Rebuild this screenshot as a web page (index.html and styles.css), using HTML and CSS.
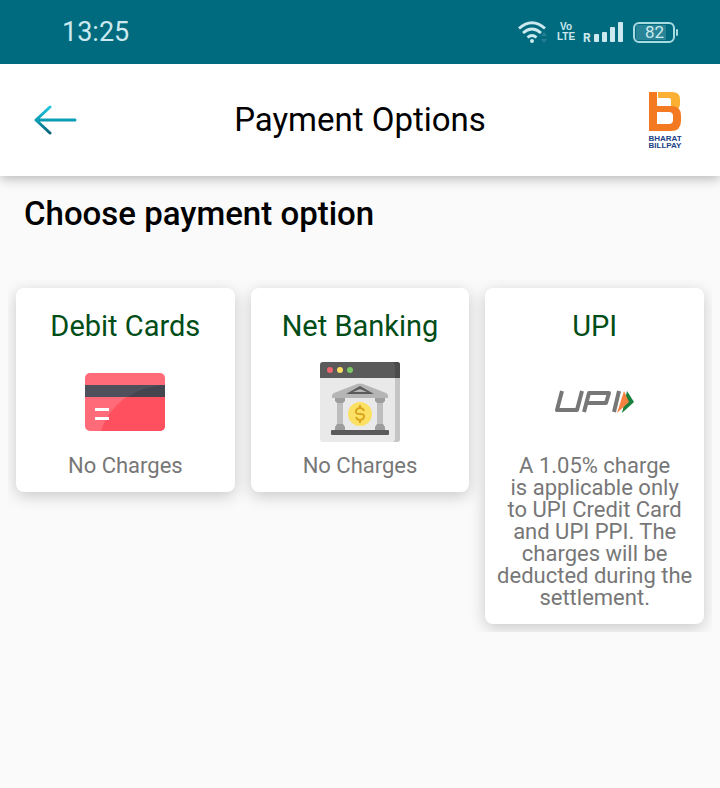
FILE: index.html
```html
<!DOCTYPE html>
<html lang="en">
<head>
    <meta charset="UTF-8">
    <meta name="viewport" content="width=device-width, initial-scale=1.0">
    <title>Payment Options</title>
    <link rel="stylesheet" href="styles.css">
</head>
<body>
    <div class="status-bar">
        <span class="clock">13:25</span>
        <div class="status-icons">
            <svg class="wifi" width="30" height="24" viewBox="0 0 30 24" fill="none" stroke="#cbe9ee" stroke-width="3">
                <path d="M1 8.500Q14 -3 27 8.500M5 13Q14 5 23 13M9.500 17.500Q14 13.500 18.500 17.500"/>
                <circle cx="14" cy="21" r="2" fill="#cbe9ee" stroke="none"/>
                <path d="M23 16l3-4 3 4zM23 19l3 4 3-4z" fill="#267f91" stroke="none"/>
            </svg>
            <span class="volte"><span>Vo</span><span>LTE</span></span>
            <span class="roaming">R</span>
            <svg class="signal" width="30" height="22" viewBox="0 0 30 22" fill="#cbe9ee">
                <rect x="0" y="13" width="5" height="8" rx="1"/>
                <rect x="8" y="11" width="5" height="10" rx="1"/>
                <rect x="16" y="6" width="5" height="15" rx="1"/>
                <rect x="24" y="1" width="5" height="20" rx="1"/>
            </svg>
            <span class="battery"><span class="battery-level">82</span></span>
        </div>
    </div>

    <header class="header">
        <button class="back" type="button" aria-label="Back">
            <svg width="44" height="32" viewBox="0 0 44 32" fill="none" stroke-width="3" stroke-linecap="round" stroke-linejoin="round">
                <defs>
                    <linearGradient id="arrow" gradientUnits="userSpaceOnUse" x1="0" y1="2" x2="0" y2="30">
                        <stop offset="0" stop-color="#22c8dd"/>
                        <stop offset="0.500" stop-color="#0b9db5"/>
                        <stop offset="1" stop-color="#075f78"/>
                    </linearGradient>
                </defs>
                <path d="M16 3L2 16l14 13M2 16h39" stroke="url(#arrow)"/>
            </svg>
        </button>
        <h1>Payment Options</h1>
        <svg class="bbps" width="36" height="58" viewBox="0 0 36 58" role="img" aria-label="Bharat BillPay">
            <path d="M11 1h14q8 0 8 7v5q0 4-4 6-1-3-5-3V9q0-2-2-2H11z" fill="#fbb034"/>
            <path d="M2 1h8v14h15q9 0 9 10v5q0 10-10 10H2zM10 21v12h12q4 0 4-4v-4q0-4-4-4z" fill="#f37a20" fill-rule="evenodd"/>
            <text class="bbps-text" x="18" y="50">BHARAT</text>
            <text class="bbps-text" x="18" y="57">BILLPAY</text>
        </svg>
    </header>

    <main>
        <h2>Choose payment option</h2>

        <div class="options">
            <button class="option" type="button">
                <span class="option-title">Debit Cards</span>
                <svg width="80" height="80" viewBox="0 0 80 80">
                    <clipPath id="card-shape"><rect y="11" width="80" height="58" rx="5"/></clipPath>
                    <g clip-path="url(#card-shape)">
                        <path d="M0 11h80v58H0z" fill="#ff6b78"/>
                        <path d="M0 23h80v12H0z" fill="#50505c"/>
                        <path d="M16 69C24 45 45 25 80 23v46z" fill="#ff5060"/>
                        <path d="M0 23h80v12H0z" fill="#50505c"/>
                        <path d="M43 35Q59 24 80 23v12z" fill="#454550"/>
                        <path d="M10 46h14v3H10zM10 55h14v3H10z" fill="#fff"/>
                    </g>
                </svg>
                <span class="option-note">No Charges</span>
            </button>

            <button class="option" type="button">
                <span class="option-title">Net Banking</span>
                <svg width="80" height="80" viewBox="0 0 80 80">
                    <clipPath id="window-shape"><rect width="80" height="80" rx="3"/></clipPath>
                    <g clip-path="url(#window-shape)">
                        <path d="M0 0h80v80H0z" fill="#e9e9e9"/>
                        <path d="M75 16h5v64h-7q2-1 2-4z" fill="#c5c5c5"/>
                        <path d="M0 0h80v16H0z" fill="#5a5a5a"/>
                        <path d="M73 0h7v16h-5V4q0-3-2-4z" fill="#4b4b4b"/>
                    </g>
                    <circle cx="10" cy="8" r="3" fill="#ed6670"/>
                    <circle cx="20" cy="8" r="3" fill="#fbdc65"/>
                    <circle cx="30" cy="8" r="3" fill="#7bc866"/>
                    <path d="M12 34q0-2 2-3l23-9q3-1 6 0l23 9q2 1 2 3v2H12z" fill="#b5b5b5"/>
                    <path d="M26 32l14-8 14 8zM33 30h14l-7-3z" fill="#5a5a5a" fill-rule="evenodd"/>
                    <path d="M17 40h6v26h-6zM57 40h6v26h-6z" fill="#bebebe"/>
                    <path d="M15 36h10v3l-2 2h-6l-2-2zM55 36h10v3l-2 2h-6l-2-2zM17 62h6l2 3v3H15v-3zM57 62h6l2 3v3H55v-3z" fill="#9d9d9d"/>
                    <rect x="11" y="68" width="58" height="5" rx="1" fill="#5a5a5a"/>
                    <circle cx="40" cy="52" r="12" fill="#fce063"/>
                    <path d="M44 49q-1-3-4-3t-4 3 4 3 4 3-4 3-4-3M40 43v3M40 58v3" fill="none" stroke="#d9a51c" stroke-width="2"/>
                </svg>
                <span class="option-note">No Charges</span>
            </button>

            <button class="option" type="button">
                <span class="option-title">UPI</span>
                <svg width="80" height="80" viewBox="0 0 80 80" role="img" aria-label="UPI">
                    <g fill="none" stroke="#777" stroke-width="4" stroke-linejoin="round">
                        <path d="M7 29L2 48h20L27 29"/>
                        <path d="M29 50l5-19h20l-3 10H32"/>
                        <path d="M64 29L59 50"/>
                    </g>
                    <path d="M72 29l7 11-12 11z" fill="#16803c"/>
                    <path d="M69 29l5 11-12 11z" fill="#f58240"/>
                </svg>
                <span class="option-note">A 1.05% charge<br>is applicable only<br>to UPI Credit Card<br>and UPI PPI. The<br>charges will be<br>deducted during the<br>settlement.</span>
            </button>
        </div>
    </main>
</body>
</html>
```
FILE: styles.css
```css
* {
    box-sizing: border-box;
}

body {
    margin: 0;
    background-color: #fafafa;
    color: #000;
    font-family: Roboto, "Liberation Sans", sans-serif;
}

button {
    border: none;
    font-family: inherit;
    cursor: pointer;
}

.status-bar {
    position: relative;
    z-index: 1;
    display: flex;
    justify-content: space-between;
    align-items: center;
    height: 64px;
    padding: 0 45px 0 62px;
    background-color: #006a7f;
    color: #cbe9ee;
}

.clock {
    font-size: 27px;
}

.status-icons {
    display: flex;
    align-items: center;
}

.volte {
    display: flex;
    flex-direction: column;
    align-items: center;
    width: 16px;
    margin: 0 9px 0 10px;
    font-family: "Liberation Sans Narrow", "Liberation Sans", sans-serif;
    font-size: 10px;
    font-weight: bold;
    line-height: 10px;
}

.roaming {
    align-self: flex-end;
    width: 11px;
    font-size: 12px;
    font-weight: bold;
    line-height: 12px;
}

.battery {
    position: relative;
    width: 42px;
    height: 21px;
    margin-left: 9px;
    padding: 1px;
    border: 2px solid #a9dbe2;
    border-radius: 6px;
}

.battery::after {
    content: "";
    position: absolute;
    top: 5px;
    right: -5px;
    width: 2px;
    height: 7px;
    border-radius: 1px;
    background-color: #a9dbe2;
}

.battery-level {
    display: block;
    width: 82%;
    padding-left: 9px;
    background-color: #288496;
    font-size: 17px;
    line-height: 15px;
}

.header {
    display: grid;
    grid-template-columns: 48px 1fr 48px;
    align-items: center;
    height: 112px;
    padding: 0 32px;
    background-color: #fff;
    box-shadow: 0 2px 12px rgba(0, 0, 0, 0.3);
}

.back {
    display: flex;
    padding: 0 2px;
    background: none;
}

.header h1 {
    margin: 0;
    font-size: 33px;
    font-weight: normal;
    line-height: 36px;
    text-align: center;
}

.bbps {
    justify-self: end;
    margin-right: 5px;
    overflow: visible;
}

.bbps-text {
    fill: #1c3f86;
    font-family: "Liberation Sans", sans-serif;
    font-size: 8px;
    font-weight: bold;
    text-anchor: middle;
}

h2 {
    margin: 0;
    padding: 20px 24px 0;
    font-size: 33px;
    font-weight: 500;
    line-height: 36px;
}

.options {
    display: grid;
    grid-template-columns: repeat(3, 1fr);
    align-items: start;
    gap: 16px;
    margin: 48px 8px 0;
    padding: 8px;
    overflow: hidden;
}

.option {
    display: flex;
    flex-direction: column;
    align-items: center;
    min-width: 0;
    padding: 22px 0 15px;
    border-radius: 8px;
    background-color: #fff;
    box-shadow: 0 4px 16px rgba(0, 0, 0, 0.2);
}

.option-title {
    margin-bottom: 20px;
    color: #004d17;
    font-size: 29px;
    line-height: 32px;
}

.option-note {
    margin-top: 13px;
    color: #777;
    font-size: 22px;
    line-height: 22px;
}
```
